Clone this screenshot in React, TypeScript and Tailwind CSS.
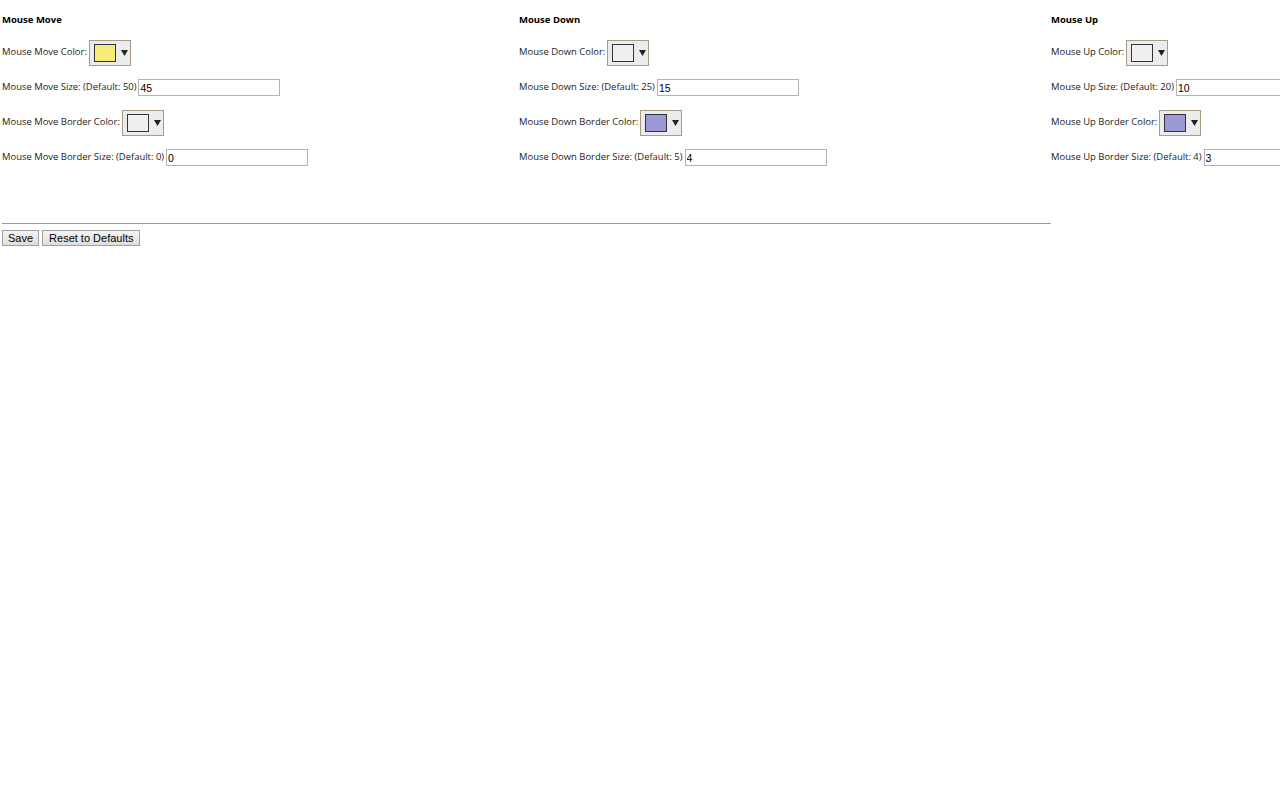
import React from 'react';

type Section = {
    title: string;
    name: string;
    color: string;
    size: string;
    sizeDefault: number;
    borderColor: string;
    borderSize: string;
    borderDefault: number;
    width: string;
};

const sections: Section[] = [
    { title: 'Mouse Move', name: 'Mouse Move', color: '#f7ec7a', size: '45', sizeDefault: 50, borderColor: '#efefef', borderSize: '0', borderDefault: 0, width: 'w-[517px]' },
    { title: 'Mouse Down', name: 'Mouse Down', color: '#efefef', size: '15', sizeDefault: 25, borderColor: '#9b98d6', borderSize: '4', borderDefault: 5, width: 'w-[532px]' },
    { title: 'Mouse Up', name: 'Mouse Up', color: '#efefef', size: '10', sizeDefault: 20, borderColor: '#9b98d6', borderSize: '3', borderDefault: 4, width: 'w-[400px]' },
];

function ColorPicker({ value }: { value: string }) {
    return (
        <div className="ml-[2px] flex h-[26px] w-[42px] items-center border border-[#a89a8a] bg-[#ececec] pl-[4px]">
            <div className="h-[18px] w-[22px] border border-[#333]" style={{ background: value }} />
            <svg width="7" height="6" viewBox="0 0 7 6" className="ml-[5px]">
                <path d="M0 0 H7 L3.5 6 Z" fill="#222" />
            </svg>
        </div>
    );
}

function SizeInput({ value }: { value: string }) {
    return (
        <input
            defaultValue={value}
            className="ml-[2px] h-[17px] w-[142px] border border-[#b4b4b4] bg-white px-[1px] font-['Liberation_Sans',Arial,sans-serif] text-[10.5px] text-black outline-none"
        />
    );
}

function Column({ s }: { s: Section }) {
    return (
        <div className={`${s.width} shrink-0`}>
            <div className="flex h-[35px] items-center pt-[5px] text-[9.5px] font-bold text-black">{s.title}</div>
            <div className="flex h-[35px] items-center">
                <span>{s.name} Color:</span>
                <ColorPicker value={s.color} />
            </div>
            <div className="flex h-[35px] items-center">
                <span>{s.name} Size: (Default: {s.sizeDefault})</span>
                <SizeInput value={s.size} />
            </div>
            <div className="flex h-[35px] items-center">
                <span>{s.name} Border Color:</span>
                <ColorPicker value={s.borderColor} />
            </div>
            <div className="flex h-[35px] items-center">
                <span>{s.name} Border Size: (Default: {s.borderDefault})</span>
                <SizeInput value={s.borderSize} />
            </div>
        </div>
    );
}

export default function App() {
    return (
        <div className="h-[800px] w-[1280px] overflow-hidden bg-white pl-[2px] font-['Open_Sans','Noto_Sans',sans-serif] text-[9.45px] text-[#222]">
            <div className="flex">
                {sections.map((s) => (
                    <Column key={s.title} s={s} />
                ))}
            </div>
            <hr className="mt-[48px] w-[1049px] border-t border-[#9a9a9a]" />
            <div className="mt-[6px] flex gap-[3px] font-['Liberation_Sans',Arial,sans-serif] text-[11px] text-black">
                <button className="h-[16px] border border-[#a0a0a0] bg-gradient-to-b from-[#f4f4f4] to-[#dedede] px-[5px] leading-[14px]">Save</button>
                <button className="h-[16px] border border-[#a0a0a0] bg-gradient-to-b from-[#f4f4f4] to-[#dedede] px-[6px] leading-[14px]">Reset to Defaults</button>
            </div>
        </div>
    );
}
